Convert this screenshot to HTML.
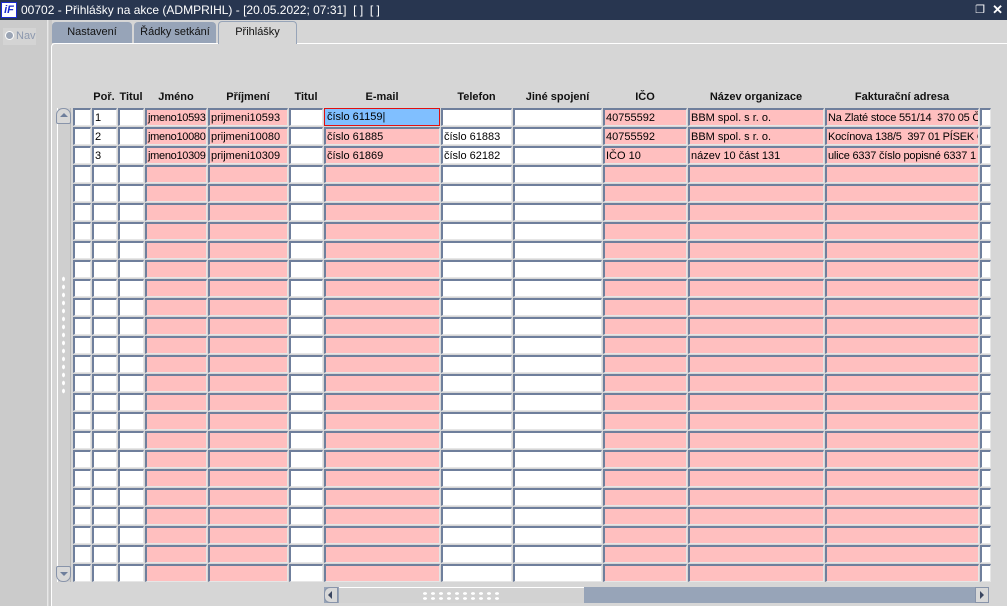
<!DOCTYPE html>
<html><head><meta charset="utf-8"><style>
*{margin:0;padding:0;box-sizing:border-box}
html,body{width:1007px;height:606px;overflow:hidden}
body{background:#d6d6d6;font-family:"Liberation Sans",Arial,sans-serif;font-size:11px;position:relative}
.title{position:absolute;left:0;top:0;width:1007px;height:20px;background:#283650;color:#fff;font-size:12px;line-height:20px}
.logo{position:absolute;left:1px;top:2px;width:16px;height:16px;background:#fff;border:1px solid #1a2ad0;color:#1a2ad0;font:italic bold 11px/14px "Liberation Sans",sans-serif;text-align:center}
.left{position:absolute;left:0;top:20px;width:48px;height:586px;background:#cbcbcb;border-right:1px solid #e8e8e8}
.sep{position:absolute;left:49px;top:20px;width:3px;height:586px;background:#c8c8c8}
.nav{position:absolute;left:3px;top:8px;width:33px;height:17px;background:#d4d4d4;color:#8c98ae;font-size:11px;line-height:17px}
.nav i{display:inline-block;width:9px;height:9px;border-radius:50%;background:#9aa4b4;border:1px solid #fff;margin:0 2px 0 2px;vertical-align:-1px}
.tab{position:absolute;top:22px;height:21px;background:#97a4b8;border-radius:4px 4px 0 0;text-align:center;line-height:20px;color:#111;font-size:11px}
.tab.on{background:#d6d6d6;border:1px solid #97a4b8;border-bottom:none;top:21px;height:23px}
.panel{position:absolute;left:51px;top:43px;width:956px;height:563px;border-top:1px solid #fff;border-left:1px solid #fff;border-radius:4px 0 0 0}
.h{position:absolute;top:91px;font-weight:bold;font-size:11px;text-align:center;color:#111}
.r{position:absolute;left:0;height:18px;width:1007px}
.r b{position:absolute;top:0;height:18px;background:#fff;border-top:2px solid #6f7f9c;border-left:2px solid #6f7f9c;border-right:1px solid #e6e6e6;border-bottom:1px solid #e6e6e6;font-weight:normal;line-height:16px;padding-left:1px;white-space:nowrap;overflow:hidden;color:#000}
.r b:nth-child(1){left:73px;width:18px}
.r b:nth-child(2){left:92px;width:25px}
.r b:nth-child(3){left:118px;width:26px}
.r b:nth-child(4){left:145px;width:62px;background:#ffbfbf;letter-spacing:-0.3px}
.r b:nth-child(5){left:208px;width:80px;background:#ffbfbf}
.r b:nth-child(6){left:289px;width:34px}
.r b:nth-child(7){left:324px;width:116px;background:#ffbfbf}
.r b:nth-child(8){left:441px;width:71px}
.r b:nth-child(9){left:513px;width:89px}
.r b:nth-child(10){left:603px;width:84px;background:#ffbfbf}
.r b:nth-child(11){left:688px;width:136px;background:#ffbfbf}
.r b:nth-child(12){left:825px;width:154px;background:#ffbfbf;letter-spacing:-0.2px}
.r b:nth-child(13){left:980px;width:11px}
.r b.sel{background:#80bfff;border:1px solid #e01010;line-height:17px;padding-left:2px}
.vs{position:absolute;left:57px;top:108px;width:14px;height:474px;background:#cfcfcf;border-left:1px solid #fff;border-right:1px solid #b8b8b8}
.vb{position:absolute;left:56px;width:15px;height:16px;background:#d8d8d8;border:1px solid #8894aa;border-radius:7px 7px 2px 2px}
.grip{position:absolute;left:61px;top:275px;width:6px;height:120px;background-image:radial-gradient(#fff 35%,transparent 45%);background-size:5px 8px}
.hs{position:absolute;left:324px;top:587px;width:665px;height:16px;background:#97a4b8}
.hthumb{position:absolute;left:339px;top:587px;width:245px;height:16px;background:#d2d2d2;border-top:1px solid #fff}
.hb{position:absolute;top:587px;width:14px;height:16px;background:#d8d8d8;border:1px solid #8894aa}
</style></head><body>
<div class="title"><div class="logo">iF</div><span style="position:absolute;left:21px">00702 - Přihlášky na akce (ADMPRIHL) - [20.05.2022; 07:31]&nbsp; [ ]&nbsp; [ ]</span><span style="position:absolute;right:22px;font-size:11px">&#x2750;</span><span style="position:absolute;right:4px;font-size:13px;font-weight:bold">✕</span></div>
<div class="left"><div class="nav"><i></i>Nav</div></div>
<div class="sep"></div>
<div class="tab" style="left:52px;width:80px">Nastavení</div>
<div class="tab" style="left:134px;width:82px">Řádky setkání</div>
<div class="panel"></div>
<div class="tab on" style="left:218px;width:79px">Přihlášky</div>

<div class="h" style="left:90px;width:28px">Poř.</div>
<div class="h" style="left:117px;width:28px">Titul</div>
<div class="h" style="left:145px;width:62px">Jméno</div>
<div class="h" style="left:208px;width:80px">Příjmení</div>
<div class="h" style="left:289px;width:34px">Titul</div>
<div class="h" style="left:324px;width:116px">E-mail</div>
<div class="h" style="left:441px;width:71px">Telefon</div>
<div class="h" style="left:513px;width:89px">Jiné spojení</div>
<div class="h" style="left:603px;width:84px">IČO</div>
<div class="h" style="left:688px;width:136px">Název organizace</div>
<div class="h" style="left:825px;width:154px">Fakturační adresa</div>

<div class="vs"></div>
<div class="vb" style="top:108px"><span style="position:absolute;left:3px;top:4px;border:4px solid transparent;border-bottom:4px solid #6f7f9c;border-top:none"></span></div>
<div class="vb" style="top:566px;border-radius:2px 2px 7px 7px"><span style="position:absolute;left:3px;top:5px;border:4px solid transparent;border-top:4px solid #6f7f9c;border-bottom:none"></span></div>
<div class="grip"></div>

<div class="r" style="top:108px"><b></b><b>1</b><b></b><b>jmeno10593</b><b>prijmeni10593</b><b></b><b class="sel">číslo 61159|</b><b></b><b></b><b>40755592</b><b>BBM spol. s r. o.</b><b>Na Zlaté stoce 551/14&nbsp; 370 05 České</b><b></b></div>
<div class="r" style="top:127px"><b></b><b>2</b><b></b><b>jmeno10080</b><b>prijmeni10080</b><b></b><b>číslo 61885</b><b>číslo 61883</b><b></b><b>40755592</b><b>BBM spol. s r. o.</b><b>Kocínova 138/5&nbsp; 397 01 PÍSEK Cz</b><b></b></div>
<div class="r" style="top:146px"><b></b><b>3</b><b></b><b>jmeno10309</b><b>prijmeni10309</b><b></b><b>číslo 61869</b><b>číslo 62182</b><b></b><b>IČO 10</b><b>název 10 část 131</b><b>ulice 6337 číslo popisné 6337 1</b><b></b></div>
<div class="r" style="top:165px"><b></b><b></b><b></b><b></b><b></b><b></b><b></b><b></b><b></b><b></b><b></b><b></b><b></b></div>
<div class="r" style="top:184px"><b></b><b></b><b></b><b></b><b></b><b></b><b></b><b></b><b></b><b></b><b></b><b></b><b></b></div>
<div class="r" style="top:203px"><b></b><b></b><b></b><b></b><b></b><b></b><b></b><b></b><b></b><b></b><b></b><b></b><b></b></div>
<div class="r" style="top:222px"><b></b><b></b><b></b><b></b><b></b><b></b><b></b><b></b><b></b><b></b><b></b><b></b><b></b></div>
<div class="r" style="top:241px"><b></b><b></b><b></b><b></b><b></b><b></b><b></b><b></b><b></b><b></b><b></b><b></b><b></b></div>
<div class="r" style="top:260px"><b></b><b></b><b></b><b></b><b></b><b></b><b></b><b></b><b></b><b></b><b></b><b></b><b></b></div>
<div class="r" style="top:279px"><b></b><b></b><b></b><b></b><b></b><b></b><b></b><b></b><b></b><b></b><b></b><b></b><b></b></div>
<div class="r" style="top:298px"><b></b><b></b><b></b><b></b><b></b><b></b><b></b><b></b><b></b><b></b><b></b><b></b><b></b></div>
<div class="r" style="top:317px"><b></b><b></b><b></b><b></b><b></b><b></b><b></b><b></b><b></b><b></b><b></b><b></b><b></b></div>
<div class="r" style="top:336px"><b></b><b></b><b></b><b></b><b></b><b></b><b></b><b></b><b></b><b></b><b></b><b></b><b></b></div>
<div class="r" style="top:355px"><b></b><b></b><b></b><b></b><b></b><b></b><b></b><b></b><b></b><b></b><b></b><b></b><b></b></div>
<div class="r" style="top:374px"><b></b><b></b><b></b><b></b><b></b><b></b><b></b><b></b><b></b><b></b><b></b><b></b><b></b></div>
<div class="r" style="top:393px"><b></b><b></b><b></b><b></b><b></b><b></b><b></b><b></b><b></b><b></b><b></b><b></b><b></b></div>
<div class="r" style="top:412px"><b></b><b></b><b></b><b></b><b></b><b></b><b></b><b></b><b></b><b></b><b></b><b></b><b></b></div>
<div class="r" style="top:431px"><b></b><b></b><b></b><b></b><b></b><b></b><b></b><b></b><b></b><b></b><b></b><b></b><b></b></div>
<div class="r" style="top:450px"><b></b><b></b><b></b><b></b><b></b><b></b><b></b><b></b><b></b><b></b><b></b><b></b><b></b></div>
<div class="r" style="top:469px"><b></b><b></b><b></b><b></b><b></b><b></b><b></b><b></b><b></b><b></b><b></b><b></b><b></b></div>
<div class="r" style="top:488px"><b></b><b></b><b></b><b></b><b></b><b></b><b></b><b></b><b></b><b></b><b></b><b></b><b></b></div>
<div class="r" style="top:507px"><b></b><b></b><b></b><b></b><b></b><b></b><b></b><b></b><b></b><b></b><b></b><b></b><b></b></div>
<div class="r" style="top:526px"><b></b><b></b><b></b><b></b><b></b><b></b><b></b><b></b><b></b><b></b><b></b><b></b><b></b></div>
<div class="r" style="top:545px"><b></b><b></b><b></b><b></b><b></b><b></b><b></b><b></b><b></b><b></b><b></b><b></b><b></b></div>
<div class="r" style="top:564px"><b></b><b></b><b></b><b></b><b></b><b></b><b></b><b></b><b></b><b></b><b></b><b></b><b></b></div>

<div class="hs"></div>
<div class="hthumb"><div style="position:absolute;left:82px;top:3px;width:80px;height:10px;background-image:radial-gradient(#fff 35%,transparent 40%);background-size:8px 5px"></div></div>
<div class="hb" style="left:324px;border-radius:6px 0 0 6px"><span style="position:absolute;left:3px;top:3px;border:4px solid transparent;border-right:4px solid #3a4660;border-left:none"></span></div>
<div class="hb" style="left:975px"><span style="position:absolute;left:4px;top:3px;border:4px solid transparent;border-left:4px solid #3a4660;border-right:none"></span></div>
</body></html>
